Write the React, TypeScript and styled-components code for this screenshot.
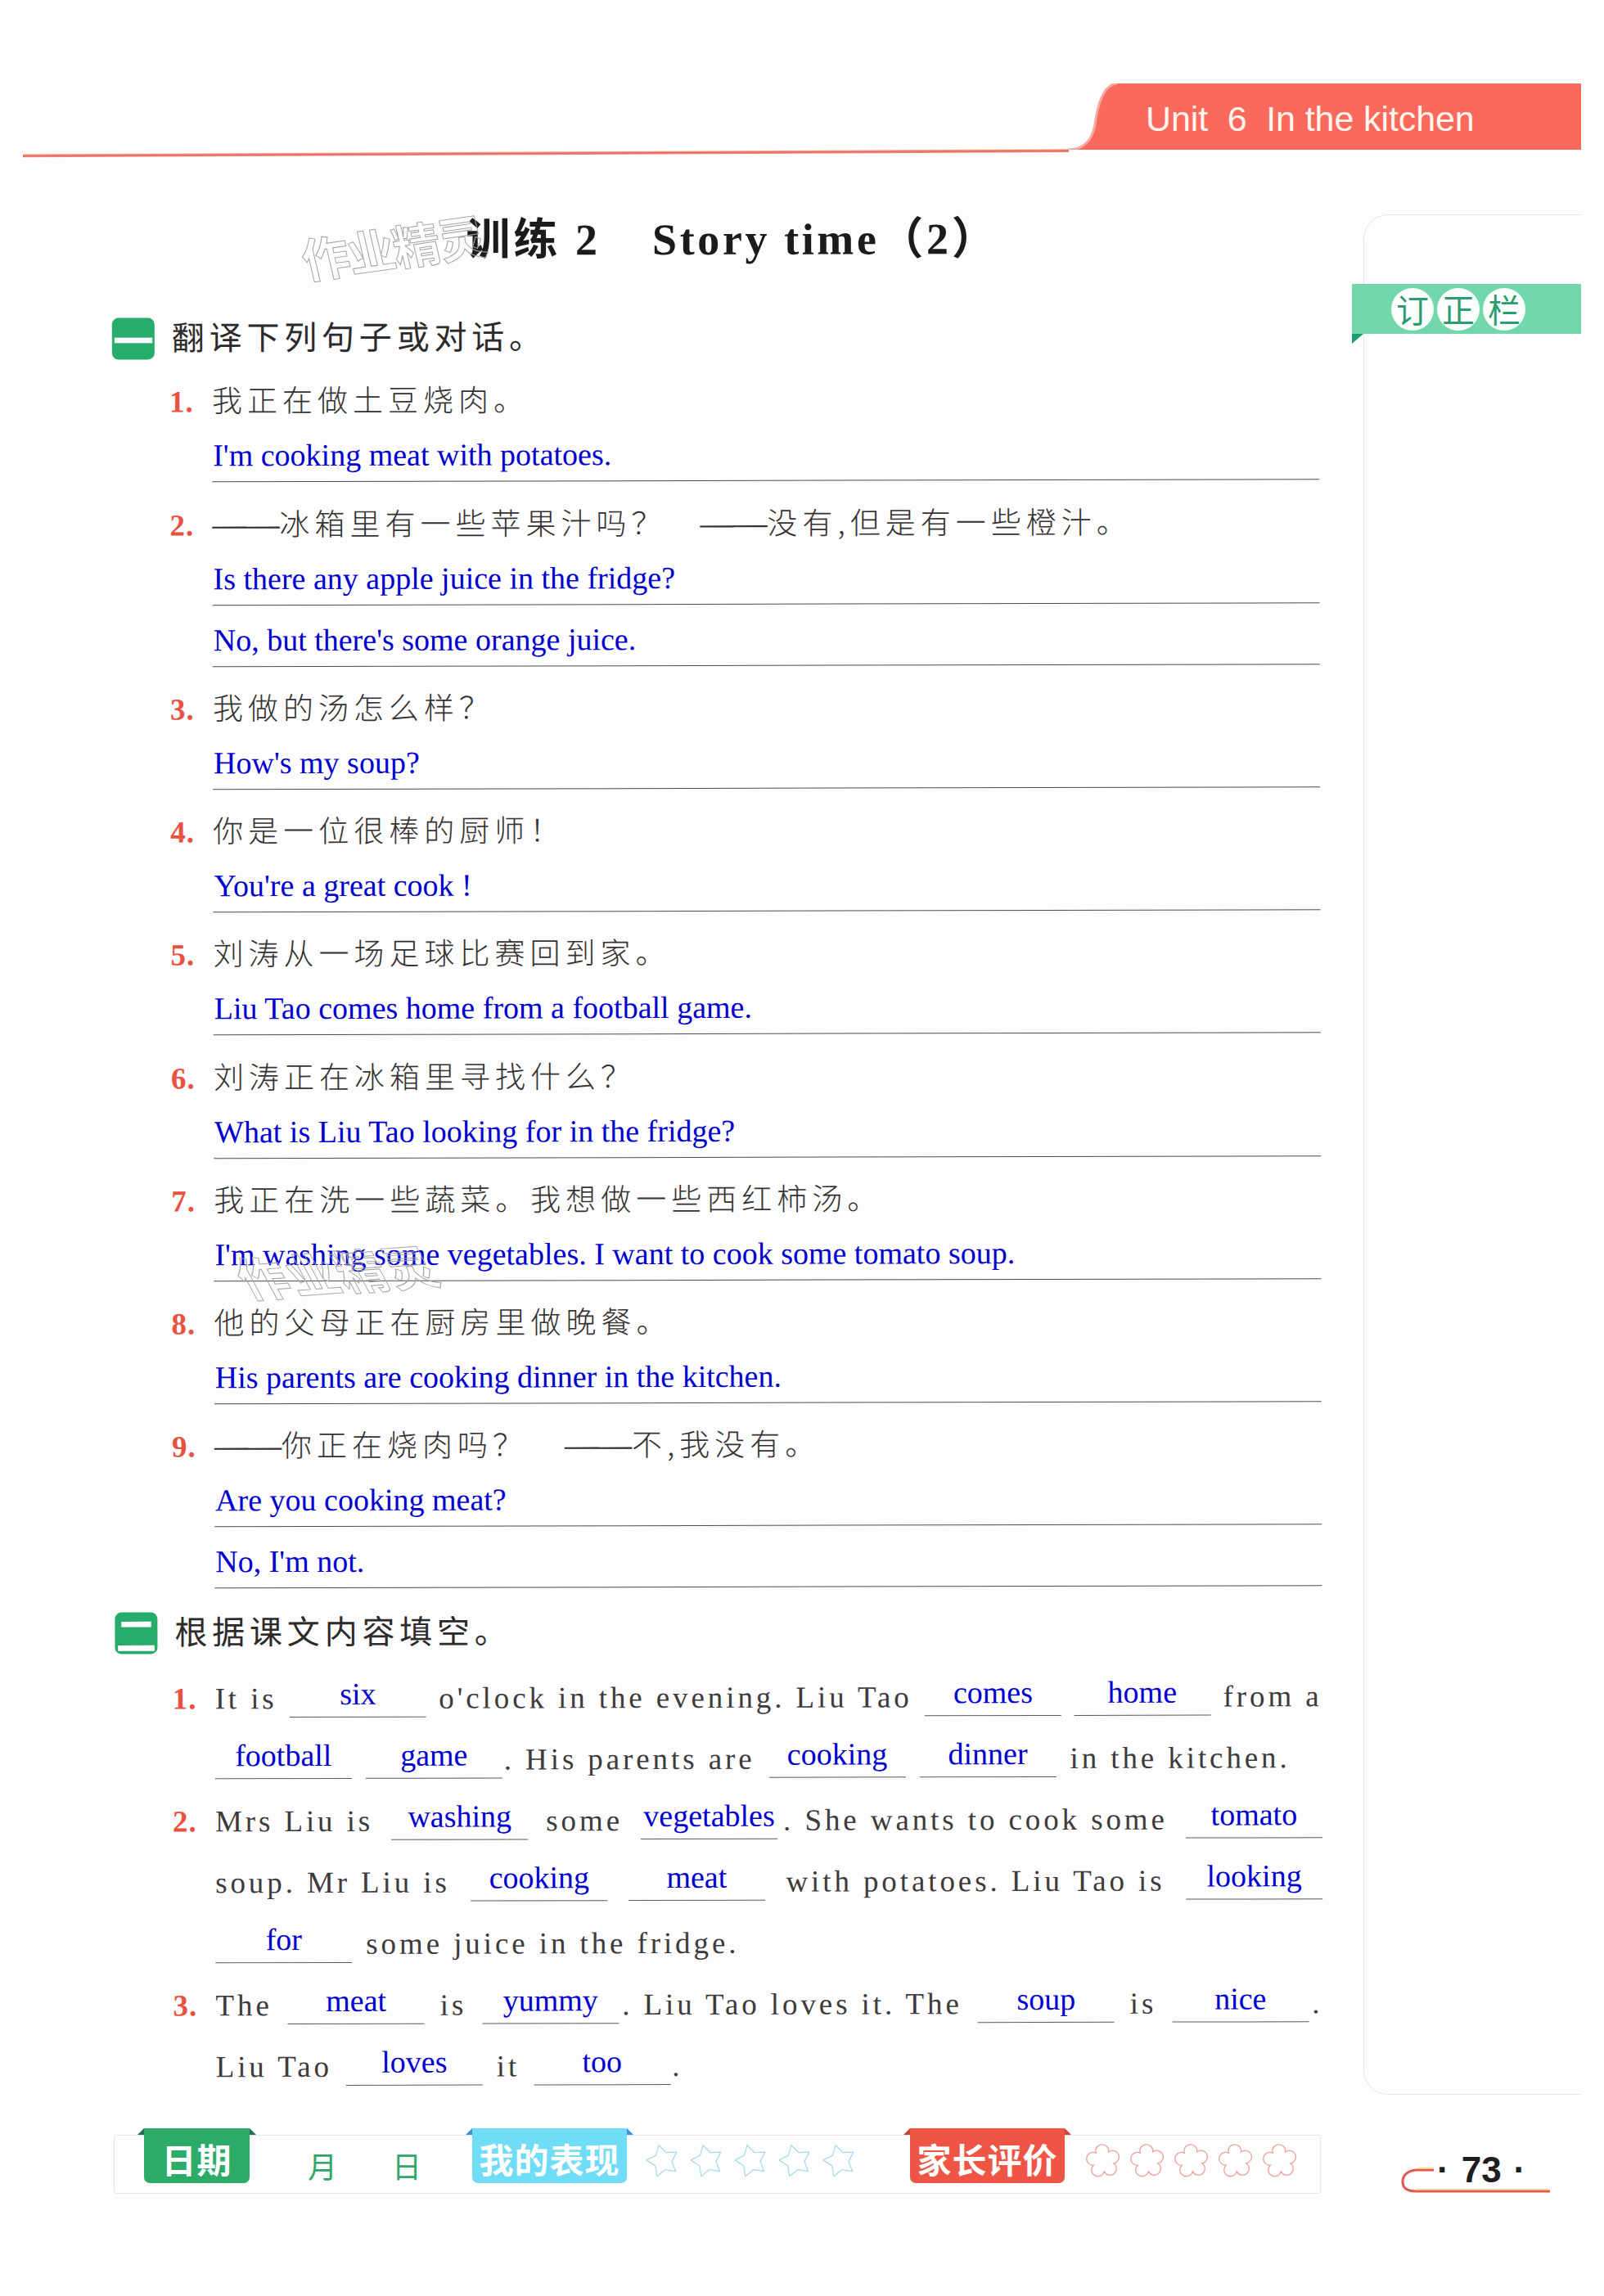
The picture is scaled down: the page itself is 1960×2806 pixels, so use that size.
import React from "react";
import styled, { createGlobalStyle } from "styled-components";

const GlobalStyle = createGlobalStyle`
  html, body { margin: 0; padding: 0; background: #ffffff; }
`;

const SANS = `"Noto Sans CJK SC", "Liberation Sans", sans-serif`;
const SERIF = `"Liberation Serif", "Noto Sans CJK SC", serif`;

const Page = styled.div`
  width: 1960px;
  height: 2806px;
  box-sizing: border-box;
  padding: 102px 28px 0 28px;
  background: #fefdfd;
  overflow: hidden;
`;

const Header = styled.header`
  display: flex;
  align-items: flex-start;
  height: 85px;
`;

const HeaderLine = styled.div`
  flex: 1;
  height: 4px;
  margin-top: 80px;
  background: linear-gradient(#f6c9a8, #e8675c 50%, #ee8d84);
  transform-origin: right center;
  transform: rotate(-0.28deg);
`;

const TabCurve = styled.svg`
  display: block;
  flex: none;
  margin-left: -1px;
`;

const TabBody = styled.div`
  width: 567px;
  height: 81px;
  box-sizing: border-box;
  padding: 0 0 0 35px;
  background: #fa6a5c;
  color: #fff5ee;
  font: 43px/86px "Liberation Sans", sans-serif;
  letter-spacing: -0.1px;
  white-space: pre;
`;

const Content = styled.div`
  display: flex;
  align-items: flex-start;
`;

const Main = styled.main`
  position: relative;
  flex: none;
  width: 1586px;
  box-sizing: border-box;
  padding-left: 111px;
  transform: rotate(-0.13deg);
`;

const Title = styled.h1`
  display: flex;
  height: 70px;
  margin: 71px 0 0;
  padding-left: 433px;
  color: #1d1a1a;
  font: 700 54px/70px ${SERIF};
  letter-spacing: 4px;
`;

const TitleGap = styled.span`
  margin-left: 63px;
  letter-spacing: 3.6px;
`;

const Watermark = styled.div<{ $left: number; $top: number; $rot: number; $skew: number; $ls: number }>`
  position: absolute;
  left: ${(p) => p.$left}px;
  top: ${(p) => p.$top}px;
  color: transparent;
  font: 700 58px/70px ${SANS};
  letter-spacing: ${(p) => p.$ls}px;
  white-space: nowrap;
  -webkit-text-stroke: 1px #a5a5a5;
  transform: rotate(${(p) => p.$rot}deg) skewX(${(p) => p.$skew}deg);
  pointer-events: none;
`;

const SectionHead = styled.h2<{ $top: number }>`
  display: flex;
  align-items: flex-start;
  gap: 21px;
  height: 51px;
  margin: ${(p) => p.$top}px 0 0;
  color: #2c2a2a;
  font: 400 40px/45px ${SANS};
  letter-spacing: 5.8px;
`;

const SectionMark = styled.span`
  flex: none;
  width: 52px;
  height: 51px;
  border-radius: 8px;
  background: #27ad6b;
  color: #ffffff;
  font: 700 50px/50px ${SANS};
  letter-spacing: 0;
  text-align: center;
`;

const List = styled.ol`
  margin: 0;
  padding: 0;
  list-style: none;
`;

const Item = styled.li`
  display: grid;
  grid-template-columns: 52px 1fr;
  width: 1405px;
  padding-top: 16.25px;
  margin-left: 70px;
`;

const Num = styled.span`
  height: 75px;
  color: #ea5140;
  font: 700 37px/71px "Liberation Serif", serif;
  letter-spacing: 1px;
`;

const Question = styled.div<{ $gap?: number }>`
  display: flex;
  gap: ${(p) => p.$gap ?? 0}px;
  height: 75px;
  color: #343232;
  font: 300 37px/65px ${SANS};
  letter-spacing: 6px;
  white-space: nowrap;
`;

const Dash = styled.span`
  font-family: "Liberation Serif", serif;
  font-size: 41px;
  letter-spacing: 0;
`;

const Answer = styled.div<{ $extra?: boolean }>`
  grid-column: 2;
  height: ${(p) => (p.$extra ? 75 : 59)}px;
  box-sizing: border-box;
  display: flex;
  align-items: flex-end;
  padding: 0 0 10px 1px;
  border-bottom: 1px solid #4d4d4d;
  color: #0000d0;
  font: 38px/44px "Liberation Serif", serif;
  white-space: pre;
`;

const FillRows = styled.div`
  margin-top: 3px;
`;

const FillItem = styled.div`
  display: grid;
  grid-template-columns: 52px 1fr;
  width: 1405px;
  margin-left: 70px;
`;

const FillNum = styled(Num)`
  grid-column: 1;
  line-height: 104px;
`;

const Row = styled.div<{ $full?: boolean }>`
  grid-column: 2;
  display: flex;
  align-items: flex-end;
  justify-content: ${(p) => (p.$full ? "space-between" : "flex-start")};
  gap: ${(p) => (p.$full ? 0 : 17)}px;
  height: 75px;
  white-space: pre;
`;

const Words = styled.span<{ $tight?: boolean }>`
  margin-left: ${(p) => (p.$tight ? -15 : 0)}px;
  padding-bottom: 1px;
  color: #3d3b3b;
  font: 37px/44px "Liberation Serif", serif;
  letter-spacing: 3.9px;
`;

const Blank = styled.span`
  flex: none;
  width: 167px;
  box-sizing: border-box;
  padding-bottom: 6px;
  border-bottom: 1px solid #5a5a5a;
  color: #0000d0;
  font: 38px/44px "Liberation Serif", serif;
  text-align: center;
`;

const Aside = styled.aside`
  flex: none;
  width: 266px;
  height: 2298px;
  box-sizing: border-box;
  margin: 75px 0 0 52px;
  border: 1px solid #e6e8e6;
  border-right: 0;
  border-radius: 30px 0 0 30px;
`;

const Banner = styled.div`
  position: relative;
  display: flex;
  gap: 4px;
  align-items: center;
  width: 280px;
  height: 61px;
  box-sizing: border-box;
  margin: 84px 0 0 -15px;
  padding-left: 48px;
  background: #72d8ab;

  &::after {
    content: "";
    position: absolute;
    left: 0;
    top: 100%;
    border-style: solid;
    border-width: 12px 14px 0 0;
    border-color: #1f9b74 transparent transparent transparent;
  }
`;

const BannerChar = styled.span`
  width: 52px;
  height: 52px;
  border-radius: 50%;
  background: #fdfffd;
  color: #2b9d72;
  font: 400 40px/50px ${SANS};
  text-align: center;
`;

const Footer = styled.footer`
  display: flex;
  align-items: flex-start;
  margin-top: 49px;
  padding-left: 111px;
`;

const Bar = styled.div`
  display: flex;
  flex: none;
  align-items: flex-start;
  width: 1475px;
  height: 72px;
  box-sizing: border-box;
  padding-left: 36px;
  border: 1px solid #e8e8e8;
  border-radius: 3px;
`;

const BarTab = styled.div<{ $bg: string; $fold: string; $w: number; $ml: number }>`
  position: relative;
  flex: none;
  width: ${(p) => p.$w}px;
  height: 67px;
  margin: -9px 0 0 ${(p) => p.$ml}px;
  border-radius: 0 0 7px 7px;
  background: ${(p) => p.$bg};
  color: #ffffff;
  font: 700 42px/74px ${SANS};
  letter-spacing: 1px;
  text-align: center;
  white-space: nowrap;

  &::before,
  &::after {
    content: "";
    position: absolute;
    top: 0;
    border-style: solid;
    border-color: transparent transparent ${(p) => p.$fold} transparent;
  }
  &::before {
    left: -8px;
    border-width: 0 0 8px 8px;
  }
  &::after {
    right: -8px;
    border-width: 0 8px 8px 0;
  }
`;

const DatePart = styled.span<{ $ml: number }>`
  flex: none;
  width: 40px;
  margin-left: ${(p) => p.$ml}px;
  color: #2fa768;
  font: 400 36px/72px ${SANS};
  text-align: center;
`;

const Shapes = styled.div<{ $gap: number; $ml: number }>`
  display: flex;
  flex: none;
  gap: ${(p) => p.$gap}px;
  margin: 9px 0 0 ${(p) => p.$ml}px;
`;

const PageNumber = styled.div`
  position: relative;
  display: flex;
  flex: none;
  align-items: center;
  gap: 15px;
  width: 184px;
  height: 72px;
  box-sizing: border-box;
  margin-left: 98px;
  padding: 14px 0 0 44px;
  color: #1f1d1d;
  font: 700 44px/60px "Liberation Sans", sans-serif;
`;

const PageCurve = styled.svg`
  position: absolute;
  left: 0;
  top: 38px;
`;

// star and flower outlines of the footer rating strip
const starPoints = (() => {
  const pts: string[] = [];
  for (let i = 0; i < 10; i++) {
    const r = i % 2 === 0 ? 20 : 11;
    const a = (Math.PI / 5) * i - Math.PI / 2 - 0.26;
    pts.push(`${(21 + r * Math.cos(a)).toFixed(1)},${(22 + r * Math.sin(a)).toFixed(1)}`);
  }
  return pts.join(" ");
})();

const flowerPath = (() => {
  const notch = (i: number) => {
    const a = ((Math.PI * 2) / 5) * i - Math.PI / 2 + Math.PI / 5 - 0.1;
    return `${(22 + 13 * Math.cos(a)).toFixed(1)} ${(22 + 13 * Math.sin(a)).toFixed(1)}`;
  };
  let d = `M${notch(4)}`;
  for (let i = 0; i < 5; i++) d += ` A7.9 7.9 0 1 1 ${notch(i)}`;
  return d + " Z";
})();

const Star = () => (
  <svg width="42" height="44" viewBox="0 0 42 44">
    <polygon points={starPoints} fill="none" stroke="#a3dcec" strokeWidth="1.3" strokeLinejoin="round" />
  </svg>
);

const Flower = () => (
  <svg width="44" height="44" viewBox="0 0 44 44">
    <path d={flowerPath} fill="none" stroke="#e9a49c" strokeWidth="1.3" />
  </svg>
);

type QA = { n: number; q: string[]; a: string[]; gap?: number };

const translations: QA[] = [
  { n: 1, q: ["我正在做土豆烧肉。"], a: ["I'm cooking meat with potatoes."] },
  {
    n: 2,
    q: ["——冰箱里有一些苹果汁吗？", "——没有,但是有一些橙汁。"],
    gap: 41,
    a: ["Is there any apple juice in the fridge?", "No, but there's some orange juice."],
  },
  { n: 3, q: ["我做的汤怎么样？"], a: ["How's my soup?"] },
  { n: 4, q: ["你是一位很棒的厨师！"], a: ["You're a great cook !"] },
  { n: 5, q: ["刘涛从一场足球比赛回到家。"], a: ["Liu Tao comes home from a football game."] },
  { n: 6, q: ["刘涛正在冰箱里寻找什么？"], a: ["What is Liu Tao looking for in the fridge?"] },
  { n: 7, q: ["我正在洗一些蔬菜。我想做一些西红柿汤。"], a: ["I'm washing some vegetables. I want to cook some tomato soup."] },
  { n: 8, q: ["他的父母正在厨房里做晚餐。"], a: ["His parents are cooking dinner in the kitchen."] },
  {
    n: 9,
    q: ["——你正在烧肉吗？", "——不,我没有。"],
    gap: 45,
    a: ["Are you cooking meat?", "No, I'm not."],
  },
];

// "_x" is a filled blank, ".x" text glued to the blank before it, the rest plain words
const fillIn: { n?: number; full?: boolean; parts: string[] }[] = [
  { n: 1, full: true, parts: ["It is", "_six", "o'clock in the evening. Liu Tao", "_comes", "_home", "from a"] },
  { parts: ["_football", "_game", ".. His parents are", "_cooking", "_dinner", "in the kitchen."] },
  { n: 2, full: true, parts: ["Mrs Liu is", "_washing", "some", "_vegetables", ".. She wants to cook some", "_tomato"] },
  { full: true, parts: ["soup. Mr Liu is", "_cooking", "_meat", "with potatoes. Liu Tao is", "_looking"] },
  { parts: ["_for", "some juice in the fridge."] },
  { n: 3, full: true, parts: ["The", "_meat", "is", "_yummy", ".. Liu Tao loves it. The", "_soup", "is", "_nice", ".."] },
  { parts: ["Liu Tao", "_loves", "it", "_too", ".."] },
];

const QuestionText = ({ text }: { text: string }) =>
  text.startsWith("——") ? (
    <span>
      <Dash>——</Dash>
      {text.slice(2)}
    </span>
  ) : (
    <span>{text}</span>
  );

const App = () => (
  <Page>
    <GlobalStyle />
    <Header>
      <HeaderLine />
      <TabCurve width="60" height="81" viewBox="0 0 60 81">
        <path d="M0 81 C20 81 30 68 33 50 C37 20 45 1 60 0 L60 81 Z" fill="#fa6a5c" />
        <path d="M0 81 C20 81 30 68 33 50 C37 20 45 1 60 0" fill="none" stroke="#f5aa9f" strokeWidth="3" />
      </TabCurve>
      <TabBody>{"Unit  6  In the kitchen"}</TabBody>
    </Header>
    <Content>
      <Main>
        <Title>
          <span>训练 2</span>
          <TitleGap>Story time（2）</TitleGap>
        </Title>
        <Watermark $left={342} $top={78} $rot={-8} $skew={5} $ls={-2}>作业精灵</Watermark>
        <Watermark $left={262} $top={1330} $rot={-4} $skew={24} $ls={2}>作业精灵</Watermark>
        <SectionHead $top={59}>
          <SectionMark>一</SectionMark>
          翻译下列句子或对话。
        </SectionHead>
        <List>
          {translations.map((item) => (
            <Item key={item.n}>
              <Num>{item.n}.</Num>
              <Question $gap={item.gap}>
                {item.q.map((q) => (
                  <QuestionText key={q} text={q} />
                ))}
              </Question>
              {item.a.map((a, i) => (
                <Answer key={a} $extra={i > 0}>
                  {a}
                </Answer>
              ))}
            </Item>
          ))}
        </List>
        <SectionHead $top={29}>
          <SectionMark>二</SectionMark>
          根据课文内容填空。
        </SectionHead>
        <FillRows>
          {fillIn.map((row, i) => (
            <FillItem key={i}>
              <FillNum>{row.n ? `${row.n}.` : ""}</FillNum>
              <Row $full={row.full}>
                {row.parts.map((p, j) =>
                  p[0] === "_" ? (
                    <Blank key={j}>{p.slice(1)}</Blank>
                  ) : p.startsWith("..") ? (
                    <Words key={j} $tight>
                      {p.slice(1)}
                    </Words>
                  ) : (
                    <Words key={j}>{p}</Words>
                  )
                )}
              </Row>
            </FillItem>
          ))}
        </FillRows>
      </Main>
      <Aside>
        <Banner>
          <BannerChar>订</BannerChar>
          <BannerChar>正</BannerChar>
          <BannerChar>栏</BannerChar>
        </Banner>
      </Aside>
    </Content>
    <Footer>
      <Bar>
        <BarTab $bg="#2dab68" $fold="#1d6f57" $w={129} $ml={0}>日期</BarTab>
        <DatePart $ml={69}>月</DatePart>
        <DatePart $ml={63}>日</DatePart>
        <BarTab $bg="#70dcf6" $fold="#3f8fd8" $w={189} $ml={60}>我的表现</BarTab>
        <Shapes $gap={12} $ml={23}>
          {[0, 1, 2, 3, 4].map((i) => (
            <Star key={i} />
          ))}
        </Shapes>
        <BarTab $bg="#ef5545" $fold="#c8453a" $w={189} $ml={65}>家长评价</BarTab>
        <Shapes $gap={10} $ml={25}>
          {[0, 1, 2, 3, 4].map((i) => (
            <Flower key={i} />
          ))}
        </Shapes>
      </Bar>
      <PageNumber>
        <PageCurve width="184" height="34" viewBox="0 0 184 34">
          <path d="M40 5 H20 C8 5 2 12 2 19 C2 27 8 31 18 31 H182" fill="none" stroke="#e4574c" strokeWidth="3" />
          <path d="M40 3 H20 M18 29 H182" fill="none" stroke="#f6cf6f" strokeWidth="1.5" />
        </PageCurve>
        <span>·</span>
        <span>73</span>
        <span>·</span>
      </PageNumber>
    </Footer>
  </Page>
);

export default App;
